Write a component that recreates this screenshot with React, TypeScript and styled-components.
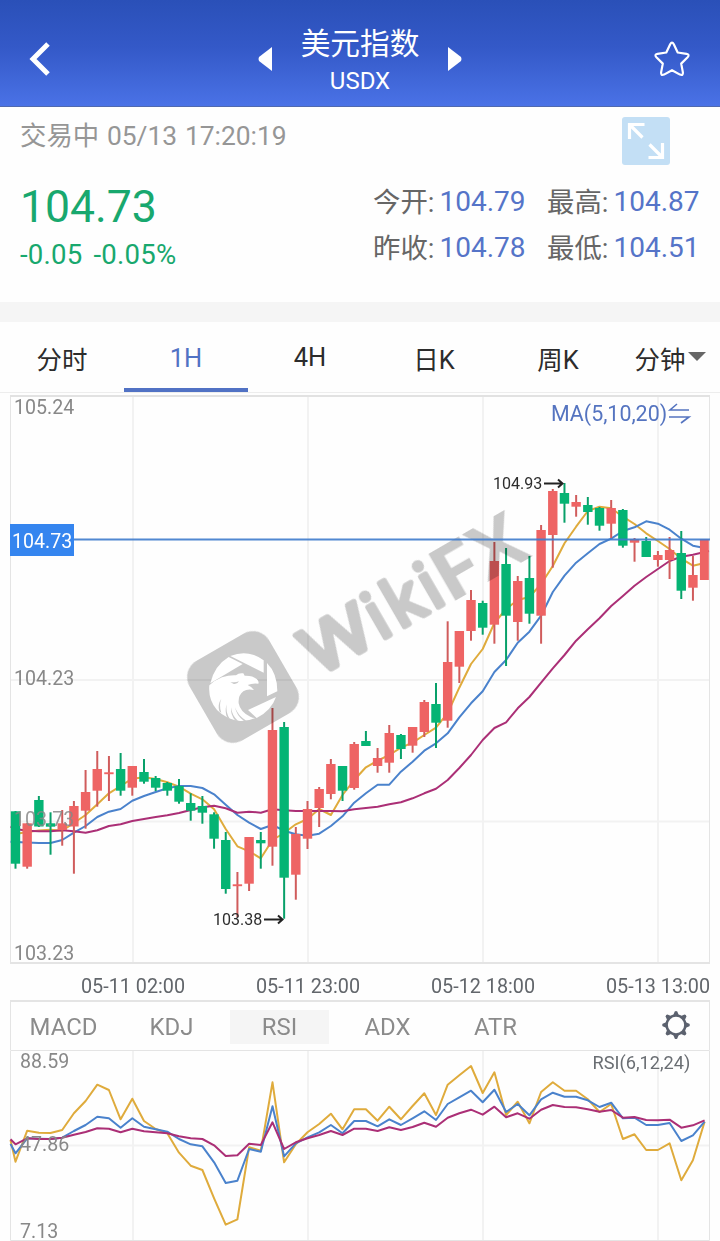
import React from "react";
import styled, { createGlobalStyle } from "styled-components";

const GlobalStyle = createGlobalStyle`
  * { box-sizing: border-box; }
  body { margin: 0; background: #fff; font-family: Roboto, "Noto Sans CJK SC", sans-serif; }
  svg { display: block; overflow: visible; }
`;

const Screen = styled.main`
  width: 720px;
  height: 1241px;
  overflow: hidden;
  background: #fefefe;
`;

const Header = styled.header`
  height: 107px;
  display: grid;
  grid-template-columns: 80px 1fr 80px;
  align-items: center;
  padding-top: 11px;
  color: #fff;
  background: linear-gradient(#2a50b8, #3459c8 45%, #4a72e6);
  border-bottom: 1px solid #5069ae;
`;

const IconSlot = styled.div<{ $end?: boolean }>`
  display: flex;
  justify-content: ${(p) => (p.$end ? "flex-end" : "flex-start")};
  padding: 0 ${(p) => (p.$end ? 30 : 0)}px 0 ${(p) => (p.$end ? 0 : 28)}px;
`;

const Switcher = styled.div`
  display: flex;
  align-items: center;
  justify-content: center;
  gap: 27px;
`;

const Title = styled.div`
  width: 120px;
  text-align: center;
  margin-top: 6px;
`;

const Name = styled.div`
  font-size: 29.7px;
  line-height: 38px;
  white-space: nowrap;
`;

const Code = styled.div`
  font-size: 24px;
  line-height: 36px;
`;

const Quote = styled.section`
  height: 195px;
  padding: 10px 20px 0 20px;
`;

const StatusRow = styled.div`
  display: flex;
  justify-content: space-between;
  padding-right: 30px;
  height: 64px;
`;

const Status = styled.div`
  color: #969696;
  font-size: 26.4px;
  line-height: 38px;
  word-spacing: 1.2px;
`;

const QuoteRow = styled.div`
  display: flex;
  justify-content: space-between;
`;

const Price = styled.div`
  color: #18a86e;
  font-size: 44.5px;
  line-height: 53px;
`;

const Change = styled.div`
  color: #18a86e;
  font-size: 27.6px;
  line-height: 42px;
  letter-spacing: 0.2px;
  word-spacing: 4px;
  white-space: nowrap;
`;

const Stats = styled.div`
  display: grid;
  grid-template-columns: 174px 154px;
  grid-auto-rows: 46px;
  margin-top: -3px;
`;

const Stat = styled.div`
  display: flex;
  align-items: center;
  gap: 5px;
  white-space: nowrap;
`;

const StatLabel = styled.span`
  color: #666;
  font-size: 27.4px;
  padding: 0 0 2px 1px;
`;

const StatValue = styled.span`
  color: #5574c8;
  font-size: 28px;
`;

const Divider = styled.div`
  height: 20px;
  background: #f5f5f5;
`;

const Periods = styled.nav`
  display: flex;
  height: 71px;
  border-bottom: 1px solid #ededed;
`;

const Period = styled.div<{ $active?: boolean; $last?: boolean }>`
  flex: 0 0 ${(p) => (p.$last ? 100 : 124)}px;
  display: flex;
  align-items: center;
  justify-content: center;
  gap: 2px;
  font-size: 25.5px;
  padding-top: ${(p) => (p.$active ? 5 : 0)}px;
  color: ${(p) => (p.$active ? "#5172c4" : "#2c2c2c")};
  border-bottom: ${(p) => (p.$active ? "4px solid #5172c4" : "0")};
`;

const ChartArea = styled.section`
  height: 570px;
`;

const DateAxis = styled.div`
  display: flex;
  height: 37px;
  padding-left: 45.5px;
  overflow: hidden;
`;

const DateLabel = styled.div`
  flex: 0 0 175px;
  text-align: center;
  font-size: 19.8px;
  line-height: 48px;
  color: #62666b;
`;

const Indicators = styled.nav`
  display: flex;
  align-items: center;
  height: 50px;
  margin: 0 10px;
  border: 1px solid #e4e4e4;
  border-top-width: 2px;
  border-bottom: 0;
`;

const Indicator = styled.div<{ $active?: boolean }>`
  flex: 0 0 99px;
  height: 34px;
  line-height: 35px;
  margin: 1px 6px 0 3px;
  text-align: center;
  font-size: 23.9px;
  color: #8b8b8b;
  background: ${(p) => (p.$active ? "#f5f5f5" : "transparent")};
`;

const Settings = styled.div`
  margin-left: auto;
  padding: 0 19px 2px 0;
`;

// [high, body top, body bottom, low, rising]
type Candle = [number, number, number, number, 0 | 1];
const candles: Candle[] = [
  [811, 811.3, 863.7, 868.7, 0], [823, 823.3, 866.7, 868.7, 1], [796, 800, 826.5, 827, 0], [812.3, 823.3, 826.7, 854.7, 0],
  [810, 823.3, 830, 845.7, 1], [801, 806, 826.5, 873.7, 1], [770, 792, 810.7, 828.7, 1], [751, 769, 790.7, 806.7, 1],
  [756, 772.3, 774.2, 801, 1], [753, 769, 790.7, 795.7, 0], [766, 766, 787.7, 795.7, 1], [759, 772, 781.7, 783.7, 0],
  [776, 778, 787.7, 791, 0], [782, 783, 790.7, 795.7, 0], [779, 786, 801.7, 803.7, 0], [793.3, 803, 810.7, 820.7, 0],
  [796, 806, 812.7, 823.7, 0], [812.3, 814.3, 838.7, 848.7, 0], [832, 840, 889, 893.7, 0], [872, 884.3, 886.2, 917, 1],
  [837, 837, 883.7, 891, 1], [832, 840, 843.3, 868.7, 0], [708, 730, 846.7, 865.7, 1], [722, 727, 877.7, 918.7, 0],
  [827, 834, 874.7, 899.7, 1], [801, 809, 838.7, 849, 1], [787, 789, 808, 827, 1], [759, 764, 794, 799.3, 1],
  [766, 766, 790.7, 801, 0], [742, 744, 788, 789.7, 1], [731, 741, 746, 745.7, 0], [748, 758, 766, 772.7, 1],
  [725, 733, 762.7, 772.7, 1], [734, 735, 749, 759, 0], [727, 727, 745.7, 752.7, 1], [700, 702, 732, 737, 1],
  [683, 704, 722.7, 748, 0], [621.3, 662, 720.7, 727.7, 1], [631, 631, 666.7, 683, 1], [590, 600, 631, 640.7, 1],
  [600.7, 603, 627.7, 634.7, 0], [542, 561, 624.7, 643.7, 1], [548, 564, 615.7, 666, 0], [576, 581, 622, 640.7, 1],
  [556, 578, 613.7, 623.7, 0], [525, 530, 615.7, 643.7, 1], [489, 491, 535, 567.7, 1], [483, 493, 503.7, 522.7, 0],
  [495, 502, 506.7, 516.7, 1], [497, 505, 512, 524.7, 0], [507, 508, 525.7, 530.7, 0], [500, 508, 523.7, 538, 1],
  [509, 510, 545.7, 547.7, 0], [538, 539, 542.7, 561.7, 1], [537, 541, 557, 557, 0], [551, 555, 560, 566.7, 1],
  [537, 550, 560, 579, 1], [531, 553, 590.7, 599, 0], [556, 575, 587.7, 600.7, 1], [539, 539, 580, 580, 1],
];

const ma5 = [834, 832, 830.5, 829.7, 830.7, 823, 815, 804.3, 793.3, 786, 778.7, 777.3, 779, 782.3, 786.7, 793.7, 799.3, 809.3, 829, 846.3, 851.3, 858.3, 840, 833, 824.3, 819, 809, 815, 795, 780, 767.3, 760.7, 755, 747.7, 742.7, 735, 727.7, 713, 687.7, 664, 649, 623, 609, 600, 597, 584, 566, 543.3, 526.7, 511, 506.7, 508.3, 516.7, 524, 533.3, 541, 549, 558.7, 565.7, 563];
const ma10 = [842, 842.5, 843, 843, 840, 832.7, 826, 817, 811.7, 809, 800.7, 796, 792, 788.3, 786, 786, 788, 794.3, 804.7, 815, 822.7, 829, 825, 830.7, 834.3, 835.7, 833.7, 826, 816.3, 802.7, 793.3, 784.7, 784.7, 771.7, 761.7, 750.7, 743.3, 733.3, 717.3, 703.3, 691.3, 672, 660, 642.7, 631.7, 615.7, 592, 575.7, 562.7, 553.3, 544, 538.7, 531, 527.3, 521.3, 523.7, 529.7, 538.7, 545.7, 548];
const ma20 = [829, 830.7, 831.3, 831.3, 830.3, 831.3, 832.7, 830.3, 826, 824.3, 821, 819, 817, 815.3, 813, 810, 807.3, 805.7, 808.3, 812.7, 811.7, 812.7, 809.3, 810.3, 811, 811, 811, 811, 811.3, 809.3, 808, 806.7, 804.3, 802.3, 798.3, 793.3, 788.7, 780, 768, 755, 740, 728, 722.3, 708.3, 697, 682.7, 668.3, 655, 640.7, 629.3, 618.3, 606, 596, 585.7, 577, 569, 561, 556.7, 554.7, 552];
const rsi6 = [1161.7, 1130.7, 1132.7, 1133, 1130, 1113.3, 1101, 1084.7, 1090, 1119.3, 1098.7, 1121, 1129, 1133.3, 1152.7, 1165.7, 1170, 1198.3, 1224.7, 1219.3, 1147.3, 1150.7, 1082.3, 1162.3, 1144.3, 1132.3, 1124, 1113.7, 1129.3, 1109.3, 1109.3, 1120.7, 1106.7, 1119.3, 1106, 1093.3, 1115, 1084.7, 1075.3, 1066, 1093, 1072.3, 1115, 1101.7, 1123.3, 1092, 1082.3, 1090.7, 1090.7, 1099.3, 1112, 1104, 1139, 1134.3, 1150, 1150, 1143.3, 1180.3, 1160.3, 1121.7];
const rsi12 = [1153.3, 1138.3, 1138.7, 1139, 1137.7, 1131, 1125, 1116.7, 1118.3, 1127.7, 1118.3, 1126.7, 1129.3, 1131.7, 1139, 1144.3, 1146.3, 1162.3, 1183, 1180.7, 1149, 1151.7, 1106.3, 1156.3, 1143.3, 1137.3, 1132.3, 1125, 1133.3, 1121, 1121, 1126.3, 1119.3, 1125, 1118.3, 1111.3, 1120, 1104, 1097.3, 1090.7, 1102.3, 1089.7, 1112, 1104, 1115.3, 1099.3, 1092.7, 1096.7, 1096.7, 1100.3, 1107, 1102.7, 1118.3, 1117.7, 1125, 1125, 1123, 1141, 1135.3, 1121.7];
const rsi24 = [1144.3, 1138.3, 1139, 1139, 1137.7, 1134.7, 1132, 1128.3, 1128.7, 1132.3, 1128.7, 1131.3, 1132.3, 1133.3, 1136.3, 1138.3, 1139, 1145.3, 1156, 1155.3, 1143.7, 1145, 1122.3, 1149, 1142.3, 1138.3, 1135, 1131, 1135, 1128.7, 1128.7, 1131, 1127.3, 1130, 1127, 1122.7, 1126.7, 1117.7, 1113.3, 1109.7, 1114.7, 1106.7, 1117.3, 1113.3, 1118.7, 1109.7, 1105, 1107, 1107.3, 1109.3, 1111.7, 1110, 1117.7, 1117, 1120, 1120.3, 1119.7, 1127.7, 1125.3, 1120.3];

const YELLOW = "#dfab3c";
const BLUE = "#4a82cc";
const PURPLE = "#ab2f76";
const gridX = [133, 308, 483, 658];
const xAt = (i: number) => 15.5 + i * 11.68;
const points = (ys: number[], start?: number, end?: number) =>
  [
    ...(start === undefined ? [] : [`10.5,${start}`]),
    ...ys.map((y, i) => `${xAt(i).toFixed(1)},${y}`),
    ...(end === undefined ? [] : [`709,${end}`]),
  ].join(" ");

const Line = styled.polyline`
  fill: none;
  stroke-width: 2;
  stroke-linejoin: round;
`;

const AxisText = styled.text<{ $light?: boolean }>`
  font: 19.6px Roboto, sans-serif;
  fill: ${(p) => (p.$light ? "#fff" : "#888")};
`;

const MarkText = styled.text`
  font: 16px Roboto, sans-serif;
  fill: #2d2d2d;
`;

const RoundLetters = styled.text`
  font: 400 66px "Open Sans", "Noto Sans", sans-serif;
  stroke: #000;
  stroke-width: 5.5;
  stroke-linejoin: round;
`;

const SquareLetters = styled.text`
  font: 700 75px "Open Sans", "Noto Sans", sans-serif;
`;

const Watermark = () => (
  <g>
    <g opacity="0.21">
      <rect x="-46" y="-46" width="92" height="92" rx="19" transform="translate(243 687) rotate(-30)" />
      <g transform="translate(318 680) rotate(-30)">
        <RoundLetters x="2" y="-3" textLength="69" lengthAdjust="spacingAndGlyphs">W</RoundLetters>
        <RoundLetters x="74 96 135" y="-3">iki</RoundLetters>
        <SquareLetters x="151" y="0" textLength="47" lengthAdjust="spacingAndGlyphs">F</SquareLetters>
        <SquareLetters x="196" y="0" textLength="52" lengthAdjust="spacingAndGlyphs">X</SquareLetters>
      </g>
    </g>
    <g transform="translate(180 620) scale(.3333)" fill="#fff">
      <path d="M91 190Q103 137 146 111L188 132Z" />
      <path d="M151 108Q205 87 251 121V158Z" />
      <path d="M261 129Q292 160 292 214L261 229Z" />
      <path d="M204 270L288 231Q274 272 230 294Z" />
      <path d="M88 196Q103 181 126 172Q147 165 168 166Q176 158 190 160L194 167Q218 166 230 177Q238 184 235 191Q216 189 203 195Q214 199 222 210Q202 205 190 214Q174 226 176 250Q181 277 211 290Q219 295 226 294Q204 304 180 303Q140 299 111 270Q84 239 88 196Z" />
      <g fill="#cbcbcb">
        <path d="M151 186Q165 189 177 184Q172 194 161 192Z" />
        <path d="M124 236Q116 255 124 279L118 274Q112 253 124 236Z" />
        <path d="M140 253Q136 277 150 298L142 294Q133 275 140 253Z" />
        <path d="M153 262Q155 285 174 303L166 302Q151 284 153 262Z" />
        <path d="M165 262Q174 288 199 302L192 303Q170 288 165 262Z" />
      </g>
    </g>
  </g>
);

const PriceChart = () => (
  <svg width="720" height="570" viewBox="0 393 720 570">
    <g stroke="#f2f2f2" strokeWidth="2">
      {gridX.map((x) => <path key={x} d={`M${x} 397V963`} />)}
      <path d="M11 680H709M11 821.5H709" />
    </g>
    <path d="M10.5 963V396M709.5 396V963" stroke="#e4e4e4" />
    <path d="M10 396H710" stroke="#e2e2e2" strokeWidth="2" />
    <path d="M10 963H710" stroke="#e4e4e4" strokeWidth="2" />
    <Line points={points(ma5)} stroke={YELLOW} />
    <Line points={points(ma10, 841.7)} stroke={BLUE} />
    <Line points={points(ma20, 826.7, 551)} stroke={PURPLE} />
    {candles.map(([high, top, bottom, low, up], i) => {
      const x = xAt(i);
      return (
        <g key={i}>
          <path d={`M${x} ${high}V${low}`} stroke={up ? "#d05c5c" : "#08a069"} strokeWidth="2" />
          <rect x={x - 4.7} y={top} width={i === 59 ? 8.9 : 9.4} height={bottom - top} fill={up ? "#ee6464" : "#05b474"} />
        </g>
      );
    })}
    <Watermark />
    <path d="M74 539.5H710" stroke="#3f7ccd" strokeWidth="2" opacity=".9" />
    <rect x="10" y="524" width="64" height="32" fill="#3585ef" />
    <AxisText x="12" y="548" $light>104.73</AxisText>
    <AxisText x="14" y="414">105.24</AxisText>
    <AxisText x="14" y="685">104.23</AxisText>
    <AxisText x="14" y="826" opacity=".85">103.73</AxisText>
    <AxisText x="14" y="960">103.23</AxisText>
    <text x="551" y="421" fontFamily="Roboto, sans-serif" fontSize="21.4" fill="#5574c0">MA(5,10,20)</text>
    <path d="M689 410H670L677 404M669 417H689L681 423" fill="none" stroke="#5574c0" strokeWidth="1.6" />
    <MarkText x="493" y="489">104.93</MarkText>
    <path d="M544 483.5H562M558 479.5L562.5 483.5L558 487.5" fill="none" stroke="#222" strokeWidth="2" />
    <MarkText x="213" y="925">103.38</MarkText>
    <path d="M264 919.5H282M278 915.5L282.5 919.5L278 923.5" fill="none" stroke="#222" strokeWidth="2" />
  </svg>
);

const RsiChart = () => (
  <svg width="720" height="191" viewBox="0 1050 720 191">
    <g stroke="#f2f2f2" strokeWidth="2">
      {gridX.map((x) => <path key={x} d={`M${x} 1051V1240`} />)}
      <path d="M11 1145.5H709" />
    </g>
    <path d="M10.5 1050.5H709.5V1240.5H10.5Z" fill="none" stroke="#e4e4e4" />
    <Line points={points(rsi6, 1140)} stroke={YELLOW} />
    <Line points={points(rsi12, 1144)} stroke={BLUE} />
    <Line points={points(rsi24, 1139.3)} stroke={PURPLE} />
    <AxisText x="20" y="1068">88.59</AxisText>
    <AxisText x="20" y="1151">47.86</AxisText>
    <AxisText x="20" y="1237.5">7.13</AxisText>
    <text x="592.5" y="1069" fontFamily="Roboto, sans-serif" fontSize="18.2" fill="#6a6e73">RSI(6,12,24)</text>
  </svg>
);

const BackIcon = () => (
  <svg width="24" height="36" viewBox="0 0 24 36">
    <path d="M20 3L5 18L20 33" fill="none" stroke="#fff" strokeWidth="5" />
  </svg>
);

const Arrow = ({ flip }: { flip?: boolean }) => (
  <svg width="15" height="24" viewBox="0 0 15 24">
    <path d="M14 0V24L1 14Q0 12 1 10Z" fill="#fff" transform={flip ? "matrix(-1 0 0 1 15 0)" : undefined} />
  </svg>
);

const StarIcon = () => (
  <svg width="36" height="36" viewBox="0 0 36 36">
    <path
      d="M16.2 3.2Q18 0 19.8 3.2L23.7 11.5L32.5 12.8Q36 13.6 33.6 16.2L27.2 22.6L28.9 31.4Q29.2 35 26 33.6L18 29.2L10 33.6Q6.8 35 7.1 31.4L8.8 22.6L2.4 16.2Q0 13.6 3.5 12.8L12.3 11.5Z"
      fill="none" stroke="#fff" strokeWidth="2.2" strokeLinejoin="round"
    />
  </svg>
);

const ExpandIcon = () => (
  <svg width="48" height="48" viewBox="0 0 48 48">
    <rect width="48" height="48" rx="3" fill="#c3dff5" />
    <path d="M7.5 22V7.5H22.5M8 8L20.5 20.5M26.5 40.5H40.5V26M40 40L27.5 27.5" fill="none" stroke="#fff" strokeWidth="3.2" />
  </svg>
);

const GearIcon = () => (
  <svg width="28" height="28" viewBox="-14 -14 28 28">
    <circle r="9.4" fill="none" stroke="#5b616e" strokeWidth="2.5" />
    {[0, 45, 90, 135, 180, 225, 270, 315].map((a) => (
      <path key={a} d="M-2.8 -9.8L-1.3 -13.4Q0 -14.4 1.3 -13.4L2.8 -9.8Z" fill="#5b616e" transform={`rotate(${a})`} />
    ))}
  </svg>
);

const stats = [["今开:", "104.79"], ["最高:", "104.87"], ["昨收:", "104.78"], ["最低:", "104.51"]];
const periods = ["分时", "1H", "4H", "日K", "周K"];
const dates = ["05-11 02:00", "05-11 23:00", "05-12 18:00", "05-13 13:00"];
const indicators = ["MACD", "KDJ", "RSI", "ADX", "ATR"];

export default function App() {
  return (
    <Screen>
      <GlobalStyle />
      <Header>
        <IconSlot><BackIcon /></IconSlot>
        <Switcher>
          <Arrow />
          <Title>
            <Name>美元指数</Name>
            <Code>USDX</Code>
          </Title>
          <Arrow flip />
        </Switcher>
        <IconSlot $end><StarIcon /></IconSlot>
      </Header>
      <Quote>
        <StatusRow>
          <Status>交易中 05/13 17:20:19</Status>
          <ExpandIcon />
        </StatusRow>
        <QuoteRow>
          <div>
            <Price>104.73</Price>
            <Change>-0.05 -0.05%</Change>
          </div>
          <Stats>
            {stats.map(([label, value]) => (
              <Stat key={label}>
                <StatLabel>{label}</StatLabel>
                <StatValue>{value}</StatValue>
              </Stat>
            ))}
          </Stats>
        </QuoteRow>
      </Quote>
      <Divider />
      <Periods>
        {periods.map((p) => <Period key={p} $active={p === "1H"}>{p}</Period>)}
        <Period $last>
          分钟
          <svg width="18" height="10" viewBox="0 0 18 10"><path d="M0 0H18L9 9Z" fill="#666" /></svg>
        </Period>
      </Periods>
      <ChartArea><PriceChart /></ChartArea>
      <DateAxis>{dates.map((d) => <DateLabel key={d}>{d}</DateLabel>)}</DateAxis>
      <Indicators>
        {indicators.map((n) => <Indicator key={n} $active={n === "RSI"}>{n}</Indicator>)}
        <Settings><GearIcon /></Settings>
      </Indicators>
      <RsiChart />
    </Screen>
  );
}
